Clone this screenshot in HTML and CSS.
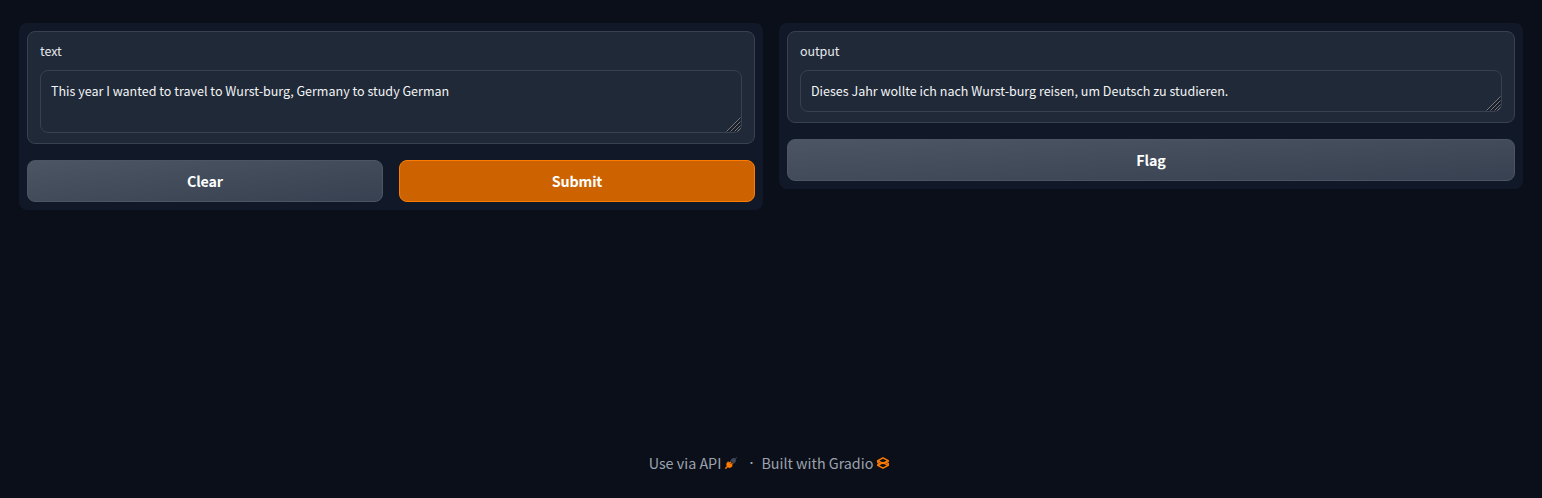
FILE: index.html
```html
<!DOCTYPE html>
<html lang="en">
<head>
<meta charset="utf-8">
<title>Gradio</title>
<link rel="stylesheet" href="styles.css">
</head>
<body>
<div class="app">
  <main class="columns">
    <section class="panel">
      <label class="block">
        <span class="label">text</span>
        <span class="field-wrap">
          <textarea class="field field-tall" spellcheck="false">This year I wanted to travel to Wurst-burg, Germany to study German</textarea>
          <svg class="grip" viewBox="0 0 15 15">
            <path class="grip-shade" d="M0 15 15 0v10l-5 5z"/>
            <path class="grip-lines" d="M.5 14.5l14-14M4.5 14.5l10-10M8.5 14.5l6-6M11.5 14.5l3-3"/>
          </svg>
        </span>
      </label>
      <div class="actions">
        <button class="button">Clear</button>
        <button class="button primary">Submit</button>
      </div>
    </section>
    <section class="panel">
      <label class="block">
        <span class="label">output</span>
        <span class="field-wrap">
          <textarea class="field" spellcheck="false">Dieses Jahr wollte ich nach Wurst-burg reisen, um Deutsch zu studieren.</textarea>
          <svg class="grip" viewBox="0 0 15 15">
            <path class="grip-shade" d="M0 15 15 0v10l-5 5z"/>
            <path class="grip-lines" d="M.5 14.5l14-14M4.5 14.5l10-10M8.5 14.5l6-6M11.5 14.5l3-3"/>
          </svg>
        </span>
      </label>
      <div class="actions">
        <button class="button">Flag</button>
      </div>
    </section>
  </main>
  <footer class="footer">
    <span class="api">Use via API</span>
    <svg class="icon plug" viewBox="0 0 12 12">
      <path d="M5.4 3.4 6.6 2c1-1.1 2.4-1.2 3.5-.6L11.5.1l.6.6-1.5 1.4c.7 1.1.5 2.5-.4 3.400L8.800 6.800z" fill="#3d4757"/>
      <path d="M3.200 4.600 7.400 8.800 6.700 9.700c-1.200 1.200-2.700 1.200-3.900.4L.8 12 0 11.200l2-2.100c-.8-1.200-.6-2.700.4-3.800zM4.400 5.600l1-1 .8.800-1 1zM5.900 7.200l1.200-1.200.8.800L6.700 8z" fill="#ff7c00" stroke="#ff7c00" stroke-width=".4"/>
    </svg>
    <span class="dot">·</span>
    <span class="built">Built with Gradio</span>
    <svg class="icon logo" viewBox="0 0 12 12" fill="none" stroke="#ff7c00" stroke-width="1.5" stroke-linejoin="round">
      <path d="M6 .8 11.200 3.600 6 6.400.8 3.600z"/>
      <path d="M6 5.600 11.200 8.400 6 11.200.8 8.400z"/>
      <path d="M.8 3.600v2L3.400 7M11.200 8.400v-2L8.600 5M11.200 3.600v1.200M.8 8.400V7.200"/>
    </svg>
  </footer>
</div>
</body>
</html>
```
FILE: styles.css
```css
* { box-sizing: border-box; }
body {
  margin: 0;
  background: #0b0f19;
  font-family: "Noto Sans CJK SC", "Noto Sans", sans-serif;
}
.app {
  display: flex;
  flex-direction: column;
  justify-content: space-between;
  height: 498px;
  padding: 23px 19px;
}
.columns { display: flex; align-items: flex-start; gap: 16px; }
.panel {
  flex: 1;
  min-width: 0;
  display: flex;
  flex-direction: column;
  gap: 16px;
  padding: 8px;
  border-radius: 8px;
  background: #111827;
}
.block {
  display: flex;
  flex-direction: column;
  padding: 8px 12px 10px;
  border: 1px solid #374151;
  border-radius: 8px;
  background: #1f2937;
}
.label {
  height: 21px;
  margin-bottom: 9px;
  color: #e5e7eb;
  font-size: 12.53px;
  line-height: 21px;
  letter-spacing: -.1px;
}
.field-wrap { position: relative; display: block; }
.field {
  display: block;
  width: 100%;
  height: 42px;
  margin: 0;
  padding: 10px;
  border: 1px solid #374151;
  border-radius: 8px;
  background: #1f2937;
  color: #f3f4f6;
  font: 12.54px/20px "Noto Sans CJK SC", "Noto Sans", sans-serif;
  overflow: hidden;
  resize: none;
  outline: none;
}
.field-tall { height: 63px; }
.grip {
  position: absolute;
  right: 1px;
  bottom: 1px;
  width: 15px;
  height: 15px;
  pointer-events: none;
}
.grip-shade { fill: #19202b; }
.grip-lines { fill: none; stroke: #8b8e91; stroke-width: .8; }
.actions { display: flex; gap: 16px; }
.button {
  flex: 1;
  height: 42px;
  padding: 0;
  border: 1px solid #4b5563;
  border-radius: 8px;
  background: linear-gradient(to bottom right, #4b5563, #374151);
  color: #fff;
  font: bold 14.3px/22px "Noto Sans CJK SC", "Noto Sans", sans-serif;
  letter-spacing: -.15px;
}
.primary { border-color: #ff7c00; background: #cc6300; }
.footer {
  display: flex;
  justify-content: center;
  align-items: center;
  height: 24px;
  padding-right: 4px;
  color: #9ca3af;
  font-size: 14.32px;
  line-height: 24px;
}
.api, .built { white-space: nowrap; }
.icon { flex: none; width: 12px; height: 12px; }
.plug { margin-left: 4px; }
.dot { width: 4px; margin: 0 8px 0 12px; font-family: "Open Sans", sans-serif; font-weight: 600; }
.logo { margin-left: 4px; }
```
